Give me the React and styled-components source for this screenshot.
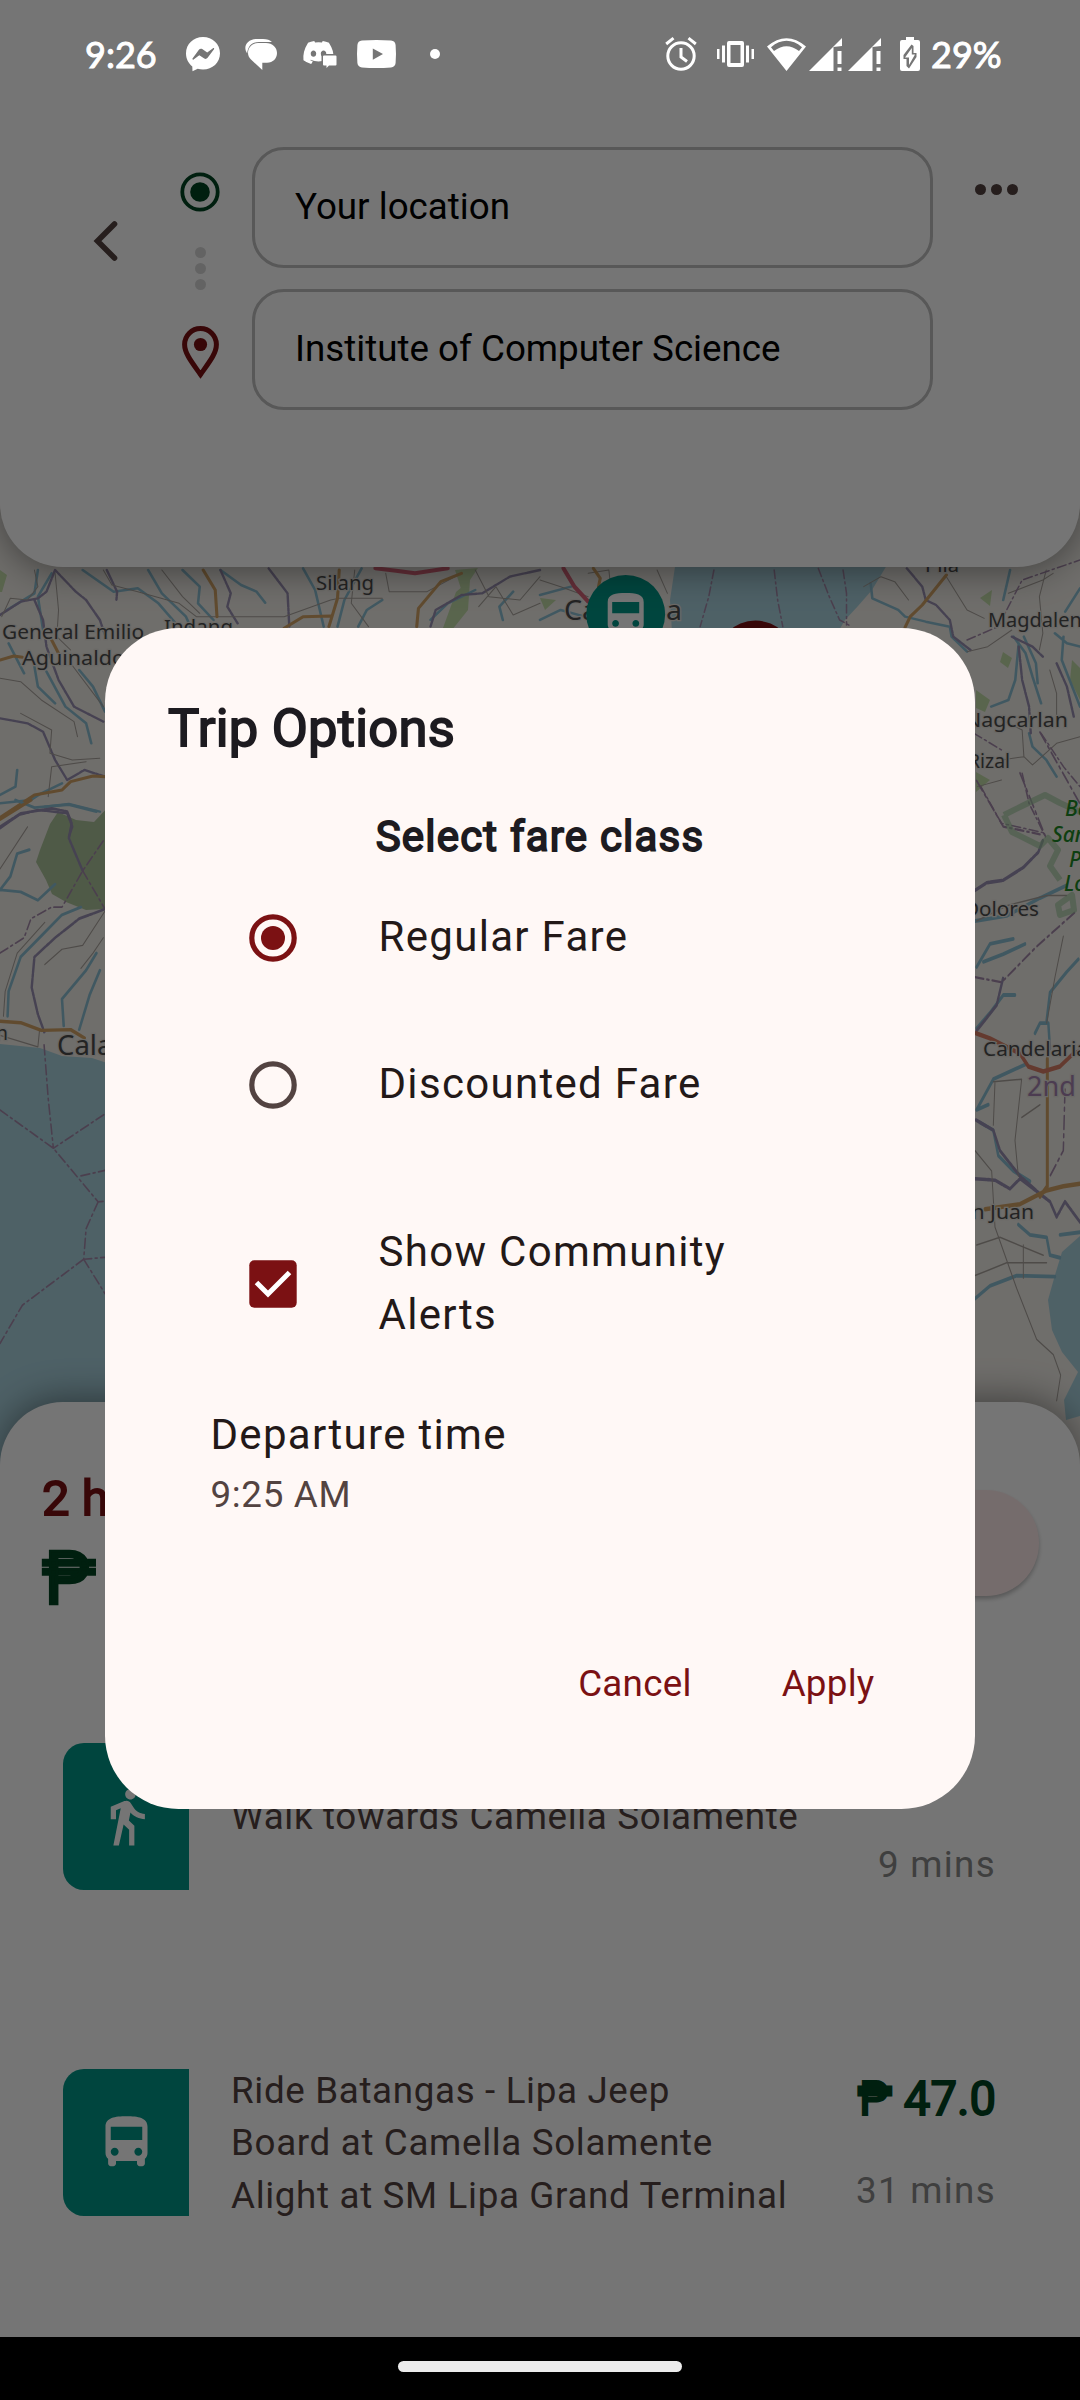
import React from "react";
import styled, { createGlobalStyle } from "styled-components";
import { MdDirectionsBus, MdDirectionsWalk } from "react-icons/md";
import { FaDiscord } from "react-icons/fa";

const GlobalStyle = createGlobalStyle`
  *, *::before, *::after { box-sizing: border-box; }
  body { margin: 0; background: #000; font-family: Roboto, "Liberation Sans", sans-serif; }
`;

const color = {
  maroon: "#7b1113",
  forest: "#014421",
  teal: "#009787",
  surface: "#fff8f6",
  onSurface: "#231918",
  muted: "#534341",
  outline: "#bfbfbf",
};

/* ---------- layers ---------- */

const Phone = styled.div`
  display: grid;
  width: 1080px;
  height: 2400px;
  overflow: hidden;
  grid-template: 2400px / 1080px;
  & > * { grid-area: 1 / 1; }
`;

const MapCanvas = styled.svg`
  display: block;
  width: 1080px;
  height: 2400px;
`;

const Screen = styled.div`
  display: flex;
  flex-direction: column;
  justify-content: space-between;
`;

const Scrim = styled.div`
  background: rgba(0, 0, 0, 0.54);
  display: flex;
  justify-content: center;
  align-items: flex-start;
  padding-top: 628px;
`;

const SystemLayer = styled.div`
  display: flex;
  flex-direction: column;
  justify-content: space-between;
`;

/* ---------- system bars ---------- */

const StatusBar = styled.div`
  display: flex;
  justify-content: space-between;
  height: 108px;
  padding: 0 78px 0 85px;
  color: #fff;
`;

const StatusGroup = styled.div`
  display: flex;
  align-items: center;
  height: 108px;
`;

const StatusText = styled.span`
  font: 400 36px/36px Lato, Roboto, sans-serif;
  -webkit-text-stroke: 1px currentColor;
  width: ${(p) => p.$width}px;
  padding-left: ${(p) => p.$inset || 0}px;
  white-space: nowrap;
`;

const StatusIcon = styled.svg`
  display: block;
  flex: none;
  overflow: visible;
  width: ${(p) => p.$w}px;
  height: ${(p) => p.$h}px;
  margin-left: ${(p) => p.$gap || 0}px;
  fill: #fff;
`;

const NavBar = styled.div`
  height: 63px;
  background: #000;
  display: flex;
  justify-content: center;
  padding-top: 24px;
`;

const NavHandle = styled.div`
  width: 284px;
  height: 11px;
  border-radius: 6px;
  background: #ececec;
`;

/* ---------- header ---------- */

const Header = styled.header`
  display: flex;
  align-items: flex-start;
  height: 567px;
  padding: 147px 0 0 81px;
  background: #fff;
  border-radius: 0 0 63px 63px;
  box-shadow: 0 4px 36px rgba(0, 0, 0, 0.42);
`;

const BackButton = styled.button`
  display: flex;
  justify-content: center;
  width: 48px;
  margin: 73px 0 0;
  padding: 0;
  border: 0;
  background: none;
`;

const RouteMarks = styled.div`
  display: flex;
  flex-direction: column;
  align-items: center;
  width: 52px;
  margin: 25px 26px 0 45px;
`;

const RouteDots = styled.div`
  display: flex;
  flex-direction: column;
  gap: 5px;
  margin: 35px 0 36px;
`;

const Dot = styled.i`
  width: 11px;
  height: 11px;
  border-radius: 50%;
  background: ${(p) => p.$color};
`;

const Fields = styled.div`
  display: flex;
  flex: none;
  flex-direction: column;
  gap: 21px;
  width: 681px;
`;

const Field = styled.div`
  display: flex;
  align-items: center;
  height: 121px;
  padding: 0 40px 2px;
  border: 3px solid ${color.outline};
  border-radius: 32px;
  font-size: 36.75px;
  color: #000;
`;

const MoreButton = styled.div`
  display: flex;
  gap: 5px;
  margin: 37px 0 0 42px;
`;

/* ---------- bottom sheet ---------- */

const Sheet = styled.section`
  height: 998px;
  padding: 88px 41px 0;
  background: #fff;
  border-radius: 63px 63px 0 0;
  box-shadow: 0 -4px 36px rgba(0, 0, 0, 0.42);
`;

const Summary = styled.div`
  display: flex;
  justify-content: space-between;
  height: 253px;
`;

const Totals = styled.div`
  display: flex;
  flex-direction: column;
  align-items: flex-start;
`;

const Bold = styled.span`
  -webkit-text-stroke: ${(p) => p.$stroke || 1.8}px currentColor;
`;

const Duration = styled(Bold)`
  margin-top: -21px;
  padding-left: 1px;
  font-size: 49px;
  line-height: 60px;
  color: ${color.maroon};
`;

const TotalFare = styled(Bold)`
  margin-top: 15px;
  padding-left: 1px;
  font-size: 73.5px;
  line-height: 70px;
  color: ${color.forest};
`;

const Pill = styled.div`
  width: 210px;
  height: 106px;
  border-radius: 53px;
  background: #ffecec;
  box-shadow: 0 3px 4px rgba(0, 0, 0, 0.25);
`;

const Steps = styled.div`
  display: flex;
  flex-direction: column;
  gap: 179px;
  padding: 0 43px 0 22px;
`;

const Step = styled.div`
  display: flex;
  align-items: center;
  height: 147px;
`;

const ModeTile = styled.div`
  display: flex;
  flex: none;
  align-items: center;
  justify-content: center;
  width: 126px;
  height: 147px;
  border-radius: 21px 0 0 21px;
  background: ${color.teal};
  color: #fff;
`;

const StepText = styled.div`
  flex: 1;
  margin-left: 42px;
  padding-top: 2px;
  font-size: 36.75px;
  line-height: 52.5px;
  letter-spacing: 0.66px;
  white-space: pre-line;
  color: ${color.muted};
`;

const StepCost = styled.div`
  display: flex;
  flex-direction: column;
  justify-content: space-between;
  align-items: flex-end;
  height: 148px;
`;

const StepFare = styled(Bold)`
  font-size: 47.25px;
  line-height: 60px;
  color: ${color.forest};
`;

const StepTime = styled.span`
  margin-top: auto;
  font-size: 36.75px;
  line-height: 52px;
  letter-spacing: 1.31px;
  color: #898989;
`;

/* ---------- dialog ---------- */

const Dialog = styled.div`
  display: flex;
  flex-direction: column;
  width: 870px;
  height: 1181px;
  padding: 65px 63px 0;
  border-radius: 73.5px;
  background: ${color.surface};
  color: ${color.onSurface};
`;

const DialogTitle = styled(Bold)`
  font-size: 52.5px;
  line-height: 70px;
  letter-spacing: 0.25px;
  color: #1d1b20;
`;

const SectionTitle = styled(Bold)`
  margin-top: 48px;
  text-align: center;
  font-size: 42px;
  line-height: 52px;
  letter-spacing: 1.2px;
  color: #1d1b20;
`;

const OptionRow = styled.label`
  display: flex;
  align-items: center;
  gap: 81.5px;
  height: ${(p) => p.$height || 147}px;
  margin-top: ${(p) => p.$gap || 0}px;
  padding: 0 140px 0 81px;
  font-size: 42px;
  line-height: 63px;
  letter-spacing: 1.31px;
`;

const Control = styled.svg`
  display: block;
  flex: none;
  width: 48px;
  height: 48px;
  margin-top: 2px;
`;

const Departure = styled.div`
  display: flex;
  flex-direction: column;
  gap: 3px;
  margin: 36px 0 0 42.5px;
`;

const DepartureLabel = styled.span`
  font-size: 42px;
  line-height: 63px;
  letter-spacing: 1.31px;
`;

const DepartureTime = styled.span`
  font-size: 36.75px;
  line-height: 52.5px;
  letter-spacing: 0.66px;
  color: ${color.muted};
`;

const Actions = styled.div`
  display: flex;
  justify-content: flex-end;
  gap: 90px;
  margin-top: 136px;
  padding-right: 37.5px;
`;

const TextButton = styled.button`
  padding: 0;
  border: 0;
  background: none;
  font: 400 36.75px/52px Roboto, sans-serif;
  letter-spacing: 0.26px;
  color: ${color.maroon};
`;

/* ---------- map ---------- */

const strokes = {
  river: { stroke: "#8dc0d4", strokeWidth: 7.5 },
  road: { stroke: "#d3a467", strokeWidth: 9 },
  trunk: { stroke: "#d9657a", strokeWidth: 12 },
  highway: { stroke: "#d97f68", strokeWidth: 9 },
  edge: { stroke: "#9a90b2", strokeWidth: 7, strokeDasharray: "34 4 8 4" },
  minor: { stroke: "#aaa49e", strokeWidth: 3 },
  border: { stroke: "#a48aaa", strokeWidth: 4.5, strokeDasharray: "26 10 6 10" },
};

const westLines = [
  ["river", "M110 150L100 220L20 270M150 160L110 230L125 330M240 150L330 215L400 205L460 250L510 310M430 150L470 220L540 290L555 325M530 150L580 200L575 250L620 300M640 150L700 195L745 215L770 248M880 145L915 210L940 320M1050 145L1000 240L980 320M1110 240L1065 270L1040 320M25 370L40 400L70 460M100 440L110 500L160 550M135 455L190 560L250 610L265 670M230 450L270 500L305 575M50 750L45 800L0 825M0 850L90 840L120 820L180 790M130 860L200 852L290 875M1380 210L1300 250L1250 300M1490 215L1450 260L1460 300"],
  ["edge", "M0 285L60 245L110 235L135 215L160 150L220 215L250 240L290 300L310 360M310 150L340 215L338 240M640 150L670 220L660 260L690 310M780 145L835 220L840 320M100 240L125 300L135 380L170 480L215 560L300 605M0 595L80 610L125 635L160 720L195 780L245 750L305 770M0 925L55 885L110 870L195 880L210 920L200 950M1568 150L1480 170L1400 220L1340 225L1265 270L1250 320"],
  ["minor", "M5 290L30 235L80 240L110 200L100 150M160 160L170 270L165 350L205 390M300 150L325 195L400 215L520 250L570 290L690 290L825 290L960 240L985 235L1110 235M470 150L530 230L580 280M1030 150L1020 250L1070 320M1120 160L1130 215L1240 215L1330 165M0 475L60 485L120 540L215 605L225 650M60 580L150 630L145 700L210 720L290 715M140 830L150 740L250 725M1380 150L1420 230L1510 240L1568 170M1390 260L1440 200L1490 285L1568 250M205 430L300 560"],
  ["road", "M590 150L625 210L630 290M985 150L980 235L955 320M825 325L880 290L960 288M1340 160L1280 185L1215 265L1210 320M0 420L40 408L65 412M150 360L170 400M0 893L100 825L180 810L205 785L270 768L305 770"],
  ["trunk", "M1090 145L1150 152L1205 160L1300 145"],
];

const southWestLines = [
  ["river", "M45 0L100 20L200 12L280 30M85 130L50 140L30 200L0 235M0 235L60 240L110 262L160 220M235 280L180 300L120 355L60 410L25 500L22 565M280 400L250 445L180 520L185 590M290 445L260 510L230 600"],
  ["edge", "M0 70L60 35L150 22L195 30L208 60L200 100L240 185M305 285L230 310L160 360L100 410L92 490L110 560L130 610"],
  ["minor", "M0 180L80 70M130 320L50 400L15 500L10 565M305 290L240 380L180 390L130 430M300 360L270 400L235 440M0 615L110 645L115 600"],
  ["road", "M0 50L90 0M0 578L60 582L120 602L205 600L245 622"],
  ["border", "M0 400L70 360L90 310L150 280L180 280L240 185L305 100M240 185L305 285M128 640L140 780L155 910L305 820M0 810L155 910L285 1050L305 1048M235 982L305 968M285 1050L250 1120L243 1200L305 1195M243 1200L65 1320L0 1420M243 1200L305 1290"],
];

const northEastLines = [
  ["river", "M960 190L965 235L1040 270L1060 290L1120 305L1190 320L1195 350L1240 395M1365 150L1345 240M1568 205L1525 275M0 225L90 200M0 300L60 270L130 290M1375 350L1410 400L1430 470L1455 550M1390 370L1380 480L1360 540L1310 560M1405 350L1440 430L1445 490M1495 340L1530 370L1568 380M1420 640L1430 680L1470 720L1500 770M1520 350L1515 420L1568 560"],
  ["edge", "M1065 145L1110 200L1120 240L1150 255L1190 300L1200 350L1250 390M1370 350L1430 380L1460 410M1390 380L1400 480L1420 560L1425 640M1500 430L1530 500L1550 590"],
  ["minor", "M0 180L60 200L140 230M140 160L200 150L210 250L250 290M340 150L370 220M940 200L990 170L1030 185L1070 240M1180 170L1240 270L1290 295M1360 220L1460 180L1490 160M1470 150L1450 230L1460 340L1450 390M1240 395L1300 380L1370 330M1480 450L1500 520L1500 590M1340 600L1400 630L1405 710L1340 720M1405 710L1430 735L1500 670L1568 650M1270 800L1340 780"],
  ["road", "M1180 165L1145 210L1110 255L1075 290L1060 322M155 145L175 175L170 200"],
  ["trunk", "M68 145L100 200L140 245"],
  ["border", "M505 150L490 230L465 320M680 150L690 240L705 320M808 145L840 230L870 300L905 320M880 150L890 220L890 315M1240 360L1330 320L1400 180L1568 120M1260 640L1340 690M1280 800L1340 910L1470 940M1455 640L1520 740L1568 800M1400 760L1420 850L1465 945"],
];

const eastLines = [
  ["river", "M105 590L200 580L300 545L380 520M110 680L150 635L220 625M130 670L190 655L255 635M110 800L150 770L190 735L225 735M320 785L330 730L380 690L415 665M285 810L300 790L325 790L330 840M110 960L160 900L260 870M110 960L145 950M120 985L160 1000L175 1050L220 1080L270 1100M235 1185L270 1205L320 1210L330 1245L360 1250M105 1330L150 1305L230 1285L345 1287M360 1205L420 1200"],
  ["edge", "M105 530L140 515L190 510L250 485L295 455L310 430M110 805L170 755L190 700M108 980L160 1000L180 1040L240 1090L300 1125M105 1095L165 1098L210 1115L240 1095L290 1120L330 1140L350 1170L375 1140L420 1180"],
  ["minor", "M110 590L200 560L320 540L380 540M370 620L345 700L320 790M165 905L160 990M160 905L245 900L225 1020L235 1090M245 975L300 950M105 1040L155 1080L165 1190L230 1310L290 1410L340 1440L362 1480L350 1530M105 1285L200 1260L320 1260M110 1225L180 1210L310 1245M250 1225L250 1290"],
  ["road", "M322 860L322 1110L300 1130M135 1155L240 1145L320 1118L370 1110L420 1105"],
  ["highway", "M108 810L150 820L240 850L265 875L310 885L360 875L400 850L420 845"],
  ["border", "M110 315L190 405L300 420M240 300L320 430M300 220L360 290L420 360M105 700L185 710L290 640L410 570M375 920L370 1040L330 1090"],
];

const labels = [
  ["Silang", 316, 590, 58, 20],
  ["General Emilio", 2, 639, 142, 20],
  ["Aguinaldo", 22, 665, 103, 20],
  ["Indang", 164, 634, 69, 20],
  ["Calamba", 564, 620, 118, 28],
  ["Pila", 925, 572, 34, 20],
  ["Magdalena", 988, 627, 105, 20],
  ["Nagcarlan", 965, 727, 103, 20],
  ["Rizal", 968, 768, 42, 20],
  ["Dolores", 964, 916, 75, 20],
  ["Candelaria", 983, 1056, 105, 20],
  ["San Juan", 948, 1219, 86, 20],
  ["Calaca", 57, 1055, 84, 27],
  ["n", -4, 1040, 12, 20],
];

function MapLines({ lines }) {
  return lines.map(([kind, d]) => (
    <path key={kind} d={d} fill="none" strokeLinejoin="round" strokeLinecap="round" {...strokes[kind]} />
  ));
}

function BaseMap() {
  return (
    <MapCanvas viewBox="0 0 1080 2400">
      <rect width="1080" height="2400" fill="#f2efe9" />
      <path fill="#aad3df" d="M0 1044L40 1048L62 1056L92 1058L110 1064V1500H0Z M676 560H890L872 590L858 606L845 620L838 632H672L670 600Z M1080 1236L1062 1252L1055 1275L1048 1300L1052 1330L1062 1352L1078 1372L1064 1400L1066 1420L1080 1416Z" />
      <g fill="#c3dca9">
        <path d="M456 592L470 580L468 610L452 630L443 628Z M0 570L7 575L2 592L0 592Z M455 570L478 568L462 592Z M540 598L556 600L545 610Z M980 598L992 590L990 606Z M976 690L990 700L985 712L976 708Z M976 772L990 780L976 792Z M1072 660L1080 668V700L1070 680Z M1003 652L1012 658L1008 668L1000 662Z" />
      </g>
      <path fill="#adc49b" d="M110 805L94 822L76 820L58 812L50 824L40 850L36 862L46 880L52 894L66 902L86 910L104 909L112 908Z" />
      <g transform="translate(0 520) scale(.3444 .3333)"><MapLines lines={westLines} /></g>
      <g transform="translate(0 800) scale(.3444 .3827)"><MapLines lines={southWestLines} /></g>
      <g transform="translate(540 520) scale(.3444 .3333)"><MapLines lines={northEastLines} /></g>
      <g transform="translate(940 620) scale(.3333 .5102)"><MapLines lines={eastLines} /></g>
      <path d="M1004 815L1022 806L1045 795L1060 803L1080 812M1004 815L1012 832L1040 846L1048 838L1058 850L1050 866L1060 880M1058 905L1072 895L1074 910L1060 915Z" fill="none" stroke="#9bc79b" strokeWidth="6" strokeLinejoin="round" opacity=".6" />
      <g fontFamily="'Noto Sans', sans-serif" fill="#4d4d4d" stroke="#e8e4de" strokeWidth="2.5" paintOrder="stroke">
        {labels.map(([text, x, y, width, size]) => (
          <text key={text} x={x} y={y} textLength={width} lengthAdjust="spacingAndGlyphs" fontSize={size}>{text}</text>
        ))}
        <text x="1027" y="1096" fontSize="27" fill="#a583b0">2nd</text>
        <g fontSize="21" fontStyle="italic" fontWeight="500" fill="#1e8a25" stroke="none">
          <text x="1065" y="816">Ba</text>
          <text x="1052" y="842">San</text>
          <text x="1069" y="867">P</text>
          <text x="1064" y="891">Lo</text>
        </g>
      </g>
      <circle cx="625.7" cy="614.4" r="39.4" fill={color.teal} />
      <MdDirectionsBus x="598.7" y="588.5" size={54} color="#fff" />
      <circle cx="755.5" cy="660" r="39.4" fill={color.maroon} />
    </MapCanvas>
  );
}

/* ---------- small drawings ---------- */

function SignalIcon({ gap }) {
  return (
    <StatusIcon $w={34} $h={33} $gap={gap} viewBox="0 0 34 33">
      <path d="M0 33L33 0V8L24.5 9V33Z" />
      <path d="M28.5 13h4v13h-4zM28.5 29.4h4V33h-4z" />
    </StatusIcon>
  );
}

function Radio({ on }) {
  const c = on ? color.maroon : color.muted;
  return (
    <Control viewBox="0 0 48 48">
      <circle cx="24" cy="24" r="21.2" fill="none" stroke={c} strokeWidth="5.2" />
      {on && <circle cx="24" cy="24" r="12" fill={c} />}
    </Control>
  );
}

function Checkbox() {
  return (
    <Control viewBox="0 0 48 48">
      <rect x=".3" y=".3" width="47.4" height="47.4" rx="5" fill={color.maroon} />
      <path d="M7.5 22.5L19 34L40.5 12.5" fill="none" stroke="#fff" strokeWidth="5" />
    </Control>
  );
}

function SystemBars() {
  return (
    <SystemLayer>
      <StatusBar>
        <StatusGroup>
          <StatusText $width={101}>9:26</StatusText>
          <StatusIcon $w={34} $h={34} viewBox="0 0 34 34">
            <path fillRule="evenodd" d="M17 0C26.5 0 34 7 34 16.3S26.5 32.6 17 32.6c-2 0-3.600-.3-5.300-.8L6.500 34.200 6.300 29.600C2.300 26.300 0 21.800 0 16.300 0 7 7.500 0 17 0ZM6.500 21.500c-.4.800.4 1.500 1.100 1l5.700-4.300 5 3.300c1 .6 2.300.5 3.100-.4L28 12.200c.5-.8-.3-1.500-1-1l-5.800 4.300-5-3.400c-1-.6-2.300-.4-3.100.5Z" />
          </StatusIcon>
          <StatusIcon $w={32} $h={31} $gap={25} viewBox="0 0 32 31">
            <path d="M12 0H18C22 0 25 1 27 3H14C7 3 2.800 7 2.200 14.500 -2.500 8 2 0 12 0Z" />
            <path d="M13 4H21C27.500 4 32 8.500 32 14S28 23.700 22 23.700H17.300V31L6 20.500C4 18.500 3 16.500 3 14 3 8.500 7 4 13 4Z" />
          </StatusIcon>
          <StatusIcon $w={35} $h={30} $gap={25} viewBox="0 0 35 30">
            <FaDiscord x="0" y="-3" size={33} color="#fff" />
            <path fill="#757575" d="M19.500 15H35V29H19.500Z" />
            <path d="M22 16.500H33.500Q34.500 16.500 34.500 17.500V25.500Q34.500 26.500 33.500 26.500H27L24.500 29V26.500H22Q21 26.500 21 25.500V17.500Q21 16.500 22 16.500Z" />
          </StatusIcon>
          <StatusIcon $w={39} $h={28} $gap={20} viewBox="0 0 39 28">
            <path fillRule="evenodd" d="M5 .6Q19.500-.6 34 .6Q38.200 1 38.600 5Q39.400 14 38.600 23Q38.200 27 34 27.400Q19.500 28.600 5 27.400Q.8 27 .4 23Q-.4 14 .4 5Q.8 1 5 .6ZM15.800 8.500V19.700L26 14Z" />
          </StatusIcon>
          <StatusIcon $w={10} $h={10} $gap={34} viewBox="0 0 10 10"><circle cx="5" cy="5" r="5" /></StatusIcon>
        </StatusGroup>
        <StatusGroup>
          <StatusIcon $w={32} $h={34} viewBox="0 0 32 34">
            <g fill="none" stroke="#fff" strokeWidth="3">
              <circle cx="16" cy="19" r="13.200" />
              <path d="M16 11V20L22 24.500M1.200 7L8.500 1.200M30.800 7L23.500 1.200" />
            </g>
          </StatusIcon>
          <StatusIcon $w={37} $h={26} $gap={20} viewBox="0 0 37 26">
            <path fillRule="evenodd" d="M0 8h2.500v10H0zM5 4.500h3v17H5zM12 0h13q2 0 2 2v22q0 2-2 2h-13q-2 0-2-2V2q0-2 2-2ZM13.500 4v18h10V4zM29 4.500h3v17h-3zM34.500 8H37v10h-2.500z" />
          </StatusIcon>
          <StatusIcon $w={39} $h={33} $gap={13} viewBox="0 0 39 33">
            <path fillRule="evenodd" d="M0 8.500Q19.500-8 39 8.500L19.500 33ZM4 9.200L7 13Q19.500 3.500 32 13L35 9.200Q19.500-3.500 4 9.200Z" />
          </StatusIcon>
          <SignalIcon gap={3} />
          <SignalIcon gap={5} />
          <StatusIcon $w={20} $h={34} $gap={18} viewBox="0 0 20 34">
            <path d="M6 0H14V3H18Q20 3 20 5V32Q20 34 18 34H2Q0 34 0 32V5Q0 3 2 3H6Z" />
            <path fill="#757575" d="M11.500 7.500L3.500 18V22H6.500V29L9 31.500L16.500 20V16H13.500V9Z" />
            <path d="M11.800 11L5 20.500H9V28L15 17.500H11.800Z" />
          </StatusIcon>
          <StatusText $width={82} $inset={11}>29%</StatusText>
        </StatusGroup>
      </StatusBar>
      <NavBar><NavHandle /></NavBar>
    </SystemLayer>
  );
}

function RouteHeader() {
  return (
    <Header>
      <BackButton>
        <svg width="26" height="42" viewBox="0 0 26 42">
          <path d="M22.500 4L5.500 21L22.500 38" fill="none" stroke={color.muted} strokeWidth="5.600" strokeLinecap="round" />
        </svg>
      </BackButton>
      <RouteMarks>
        <svg width="40" height="40" viewBox="0 0 40 40">
          <circle cx="20" cy="20" r="17.700" fill="none" stroke={color.forest} strokeWidth="3.800" />
          <circle cx="20" cy="20" r="9.800" fill={color.forest} />
        </svg>
        <RouteDots>
          <Dot $color="#d8d8d8" /><Dot $color="#d8d8d8" /><Dot $color="#d8d8d8" />
        </RouteDots>
        <svg width="37" height="53" viewBox="0 0 37 53">
          <path d="M18.500 48.500C10 36.500 2.600 27.500 2.600 18.500A15.900 16 0 0 1 34.400 18.500C34.400 27.500 27 36.500 18.500 48.500Z" fill="none" stroke={color.maroon} strokeWidth="5" />
          <circle cx="18.500" cy="18.500" r="6.600" fill={color.maroon} />
        </svg>
      </RouteMarks>
      <Fields>
        <Field>Your location</Field>
        <Field>Institute of Computer Science</Field>
      </Fields>
      <MoreButton>
        <Dot $color={color.muted} /><Dot $color={color.muted} /><Dot $color={color.muted} />
      </MoreButton>
    </Header>
  );
}

function TripSheet() {
  return (
    <Sheet>
      <Summary>
        <Totals>
          <Duration>2 h</Duration>
          <TotalFare $stroke={2.6}>₱</TotalFare>
        </Totals>
        <Pill />
      </Summary>
      <Steps>
        <Step>
          <ModeTile><MdDirectionsWalk size={63} /></ModeTile>
          <StepText>Walk towards Camella Solamente</StepText>
          <StepCost><StepTime>9 mins</StepTime></StepCost>
        </Step>
        <Step>
          <ModeTile><MdDirectionsBus size={63} /></ModeTile>
          <StepText>{"Ride Batangas - Lipa Jeep\nBoard at Camella Solamente\nAlight at SM Lipa Grand Terminal"}</StepText>
          <StepCost>
            <StepFare>₱ 47.0</StepFare>
            <StepTime>31 mins</StepTime>
          </StepCost>
        </Step>
      </Steps>
    </Sheet>
  );
}

export default function App() {
  return (
    <>
      <GlobalStyle />
      <Phone>
        <BaseMap />
        <Screen>
          <RouteHeader />
          <TripSheet />
        </Screen>
        <Scrim>
          <Dialog role="dialog">
            <DialogTitle>Trip Options</DialogTitle>
            <SectionTitle>Select fare class</SectionTitle>
            <OptionRow><Radio on />Regular Fare</OptionRow>
            <OptionRow><Radio />Discounted Fare</OptionRow>
            <OptionRow $height={168} $gap={42}><Checkbox />Show Community Alerts</OptionRow>
            <Departure>
              <DepartureLabel>Departure time</DepartureLabel>
              <DepartureTime>9:25 AM</DepartureTime>
            </Departure>
            <Actions>
              <TextButton>Cancel</TextButton>
              <TextButton>Apply</TextButton>
            </Actions>
          </Dialog>
        </Scrim>
        <SystemBars />
      </Phone>
    </>
  );
}
